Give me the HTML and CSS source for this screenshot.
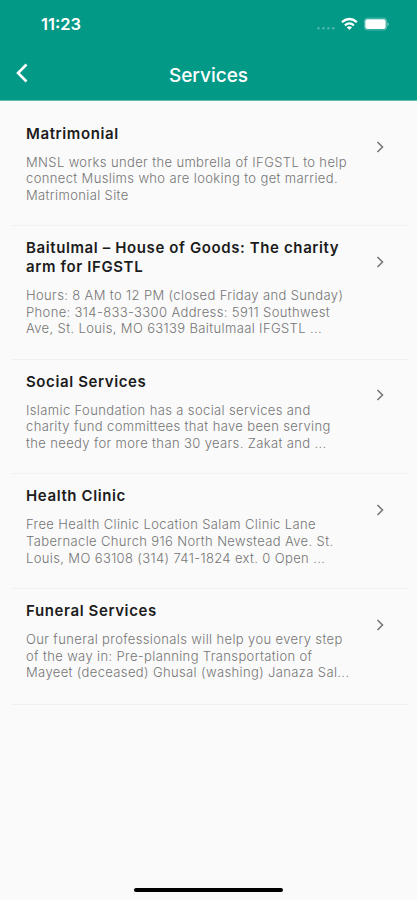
FILE: index.html
```html
<!DOCTYPE html>
<html lang="en">
<head>
<meta charset="utf-8">
<meta name="viewport" content="width=device-width">
<title>Services</title>
<link rel="stylesheet" href="styles.css">
</head>
<body>
<div class="screen">
<header class="header">
<div class="status"><span class="time">11:23</span>
<svg class="signals" width="76" height="16" viewBox="0 0 76 16"><g fill="#fff"><g opacity=".3"><circle cx="4.5" cy="12.2" r="1.2"/><circle cx="9.5" cy="12.2" r="1.2"/><circle cx="14.3" cy="12.2" r="1.2"/><circle cx="19.2" cy="12.2" r="1.2"/></g><rect x="51.3" y="3.2" width="20.4" height="9.8" rx="2"/><path d="M73.6 6.2v4q2.4-2 0-4z" opacity=".6"/></g><rect x="50.4" y="2.2" width="22.3" height="11.8" rx="3" fill="none" stroke="#fff" stroke-opacity=".35"/><g fill="none" stroke="#fff" stroke-width="2.3"><path d="M27.9 6.1q7.5-6.2 15 0M30.9 9.3q4.5-3.8 9 0"/></g><path d="M32.7 11.3q2.7-2.2 5.4 0L35.4 14z" fill="#fff"/></svg></div>
<div class="bar"><svg class="back" width="14" height="20" viewBox="0 0 14 20"><path d="M11.5 1.5 3 10l8.5 8.5" fill="none" stroke="#fff" stroke-width="2.6"/></svg><h1>Services</h1></div>
</header>
<main class="list">
<article class="item"><div class="copy"><h2>Matrimonial</h2><p>MNSL works under the umbrella of IFGSTL to help<br>connect Muslims who are looking to get married.<br>Matrimonial Site</p></div><svg class="chevron" viewBox="0 0 8 12"><path d="m1.5 1 5 5-5 5"/></svg></article>
<article class="item"><div class="copy"><h2>Baitulmal – House of Goods: The charity<br>arm for IFGSTL</h2><p>Hours: 8 AM to 12 PM (closed Friday and Sunday)<br>Phone: 314-833-3300 Address: 5911 Southwest<br>Ave, St. Louis, MO 63139 Baitulmaal IFGSTL ...</p></div><svg class="chevron" viewBox="0 0 8 12"><path d="m1.5 1 5 5-5 5"/></svg></article>
<article class="item"><div class="copy"><h2>Social Services</h2><p>Islamic Foundation has a social services and<br>charity fund committees that have been serving<br>the needy for more than 30 years. Zakat and ...</p></div><svg class="chevron" viewBox="0 0 8 12"><path d="m1.5 1 5 5-5 5"/></svg></article>
<article class="item"><div class="copy"><h2>Health Clinic</h2><p>Free Health Clinic Location Salam Clinic Lane<br>Tabernacle Church 916 North Newstead Ave. St.<br>Louis, MO 63108 (314) 741-1824 ext. 0 Open ...</p></div><svg class="chevron" viewBox="0 0 8 12"><path d="m1.5 1 5 5-5 5"/></svg></article>
<article class="item"><div class="copy"><h2>Funeral Services</h2><p>Our funeral professionals will help you every step<br>of the way in: Pre-planning Transportation of<br>Mayeet (deceased) Ghusal (washing) Janaza Sal...</p></div><svg class="chevron" viewBox="0 0 8 12"><path d="m1.5 1 5 5-5 5"/></svg></article>
</main>
<div class="home"></div>
</div>
</body>
</html>
```
FILE: styles.css
```css
* { box-sizing: border-box; }
body { margin: 0; background: #fafafa; font-family: Inter, "Liberation Sans", sans-serif; }
.screen { height: 900px; display: flex; flex-direction: column; overflow: hidden; }
.header { height: 101px; flex: none; background: #029987; border-bottom: 1px solid #62b9ae; color: #fff; }
.status { height: 50px; display: flex; justify-content: space-between; align-items: center; padding: 0 27px 2px 41px; }
.time { font-size: 16.5px; font-weight: 600; }
.bar { height: 50px; display: grid; grid-template-columns: 40px 1fr 40px; align-items: center; }
.back { margin: 0 0 4px 15px; }
h1 { margin: 0; text-align: center; font-size: 19px; font-weight: 500; }
.list { padding: 10.9px 9px 0 12px; }
.item { display: flex; justify-content: space-between; padding: 12.7px 24.5px 21.9px 14px; border-bottom: 1px solid #f1f1f1; }
.item:last-child { padding-bottom: 23px; }
.copy { white-space: nowrap; }
h2 { margin: 0; font-size: 15px; line-height: 18.9px; font-weight: 600; letter-spacing: .61px; color: #1c1c1c; }
p { margin: 10.3px 0 0; font-size: 13px; line-height: 16.6px; font-weight: 300; letter-spacing: .37px; color: #757575; }
.chevron { width: 8px; height: 12px; margin-top: 16.8px; flex: none; fill: none; stroke: #777; stroke-width: 1.6; }
.home { width: 149px; height: 4px; margin: auto auto 8px; border-radius: 2px; background: #000; }
```
